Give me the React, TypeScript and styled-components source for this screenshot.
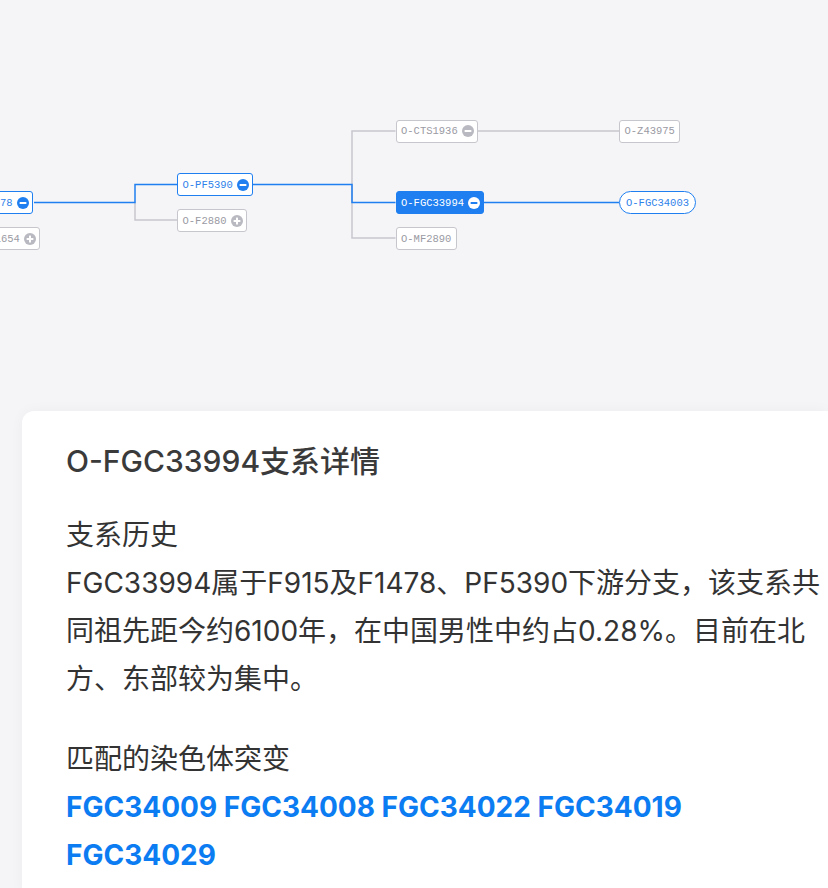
import * as React from "react";
import styled, { createGlobalStyle, css } from "styled-components";

type Kind = "active" | "selected" | "muted" | "leaf";
type Toggle = "minus" | "plus" | null;

interface ITreeNode {
  label: string;
  x: number;
  y: number;
  kind: Kind;
  toggle: Toggle;
}

const BLUE = "#1f7ff0";
const GREY = "#c6c6cd";

const nodes: ITreeNode[] = [
  { label: "O-F1478", x: -37, y: 191, kind: "active", toggle: "minus" },
  { label: "O-F11654", x: -36, y: 227, kind: "muted", toggle: "plus" },
  { label: "O-PF5390", x: 177, y: 173, kind: "active", toggle: "minus" },
  { label: "O-F2880", x: 177, y: 209, kind: "muted", toggle: "plus" },
  { label: "O-CTS1936", x: 395.5, y: 119.5, kind: "muted", toggle: "minus" },
  { label: "O-FGC33994", x: 395.5, y: 191, kind: "selected", toggle: "minus" },
  { label: "O-MF2890", x: 395.5, y: 227, kind: "muted", toggle: null },
  { label: "O-Z43975", x: 619, y: 119.5, kind: "muted", toggle: null },
  { label: "O-FGC34003", x: 619, y: 191, kind: "leaf", toggle: null },
];

const mutations = ["FGC34009", "FGC34008", "FGC34022", "FGC34019", "FGC34029"];

const GlobalStyle = createGlobalStyle`
  html, body {
    margin: 0;
    padding: 0;
    overflow: hidden;
    background: #f5f5f8;
  }
  body {
    font-family: "Inter", "Noto Sans CJK SC", sans-serif;
  }
`;

const ToggleIcon = ({ type, fill, mark }: { type: Toggle; fill: string; mark: string }) => (
  <svg width="12" height="12" viewBox="0 0 12 12">
    <circle cx="6" cy="6" r="6" fill={fill} />
    <rect x="2.6" y="5" width="6.8" height="2" rx="0.5" fill={mark} />
    {type === "plus" && <rect x="5" y="2.6" width="2" height="6.8" rx="0.5" fill={mark} />}
  </svg>
);

const iconColors = (kind: Kind) => {
  if (kind === "selected") return { fill: "#ffffff", mark: BLUE };
  if (kind === "muted") return { fill: "#b9b9c1", mark: "#ffffff" };
  return { fill: BLUE, mark: "#ffffff" };
};

export default function App() {
  return (
    <>
      <GlobalStyle />
      <Page>
        <TreeCanvas>
          <Links width="828" height="411">
            <g fill="none" stroke={GREY} strokeWidth="1.5">
              <path d="M135 202.5 V220 H177" />
              <path d="M395.5 131 H352 V238 H395.5" />
              <path d="M478 131 H619" />
            </g>
            <g fill="none" stroke={BLUE} strokeWidth="1.5">
              <path d="M34 202.5 H135 V184.5 H177" />
              <path d="M253 184.5 H352 V202.5 H395.5" />
              <path d="M484 202.5 H619" />
            </g>
          </Links>
          {nodes.map((n) => {
            const c = iconColors(n.kind);
            return (
              <Node key={n.label} $x={n.x} $y={n.y} $kind={n.kind} $hasToggle={!!n.toggle}>
                {n.label}
                {n.toggle && (
                  <ToggleWrap>
                    <ToggleIcon type={n.toggle} fill={c.fill} mark={c.mark} />
                  </ToggleWrap>
                )}
              </Node>
            );
          })}
        </TreeCanvas>

        <Card>
          <Title>O-FGC33994支系详情</Title>
          <Section>
            <Heading>支系历史</Heading>
            <Paragraph>
              FGC33994属于F915及F1478、PF5390下游分支，该支系共同祖先距今约6100年，在中国男性中约占0.28%。目前在北方、东部较为集中。
            </Paragraph>
          </Section>
          <Section>
            <Heading>匹配的染色体突变</Heading>
            <MutationList>
              {mutations.map((m) => (
                <Mutation key={m}>{m} </Mutation>
              ))}
            </MutationList>
          </Section>
        </Card>
      </Page>
    </>
  );
}

const Page = styled.div`
  width: 828px;
  height: 888px;
  overflow: hidden;
`;

const TreeCanvas = styled.div`
  position: relative;
  height: 411px;
  overflow: hidden;
`;

const Links = styled.svg`
  position: absolute;
  left: 0;
  top: 0;
`;

const Node = styled.div<{ $x: number; $y: number; $kind: Kind; $hasToggle: boolean }>`
  position: absolute;
  left: ${(p) => p.$x}px;
  top: ${(p) => p.$y}px;
  box-sizing: border-box;
  height: 23px;
  display: flex;
  align-items: center;
  padding: 0 ${(p) => (p.$hasToggle ? "3px" : "4.5px")} 0 4.5px;
  border: 1.5px solid ${BLUE};
  border-radius: 3px;
  background: #ffffff;
  color: #2f82ea;
  font-family: "Liberation Mono", "DejaVu Sans Mono", monospace;
  font-size: 10.5px;
  white-space: nowrap;

  ${(p) =>
    p.$kind === "muted" &&
    css`
      border-color: ${GREY};
      color: #9a9aa3;
    `}
  ${(p) =>
    p.$kind === "selected" &&
    css`
      background: ${BLUE};
      color: #ffffff;
    `}
  ${(p) =>
    p.$kind === "leaf" &&
    css`
      border-radius: 12px;
      padding: 0 6px;
    `}
`;

const ToggleWrap = styled.span`
  display: flex;
  margin-left: 4px;
`;

const Card = styled.div`
  margin-left: 22px;
  width: 806px;
  min-height: 480px;
  box-sizing: border-box;
  padding: 30px 0 0 44px;
  background: #ffffff;
  border-radius: 12px 0 0 0;
  box-shadow: 0 0 14px rgba(0, 0, 0, 0.04);
  color: #333333;
`;

const Title = styled.h1`
  margin: 0 0 30px;
  font-size: 30px;
  line-height: 40px;
  font-weight: 500;
  color: #3a3a3a;
`;

const Section = styled.section`
  & + & {
    margin-top: 32px;
  }
`;

const Heading = styled.h2`
  margin: 0;
  font-size: 28px;
  line-height: 48px;
  font-weight: 400;
  color: #333333;
`;

const Paragraph = styled.p`
  margin: 0;
  font-size: 28px;
  line-height: 48px;
  color: #333333;
`;

const MutationList = styled.div`
  font-size: 28px;
  line-height: 48px;
  font-weight: 700;
`;

const Mutation = styled.span`
  color: #0c7cf2;
`;
